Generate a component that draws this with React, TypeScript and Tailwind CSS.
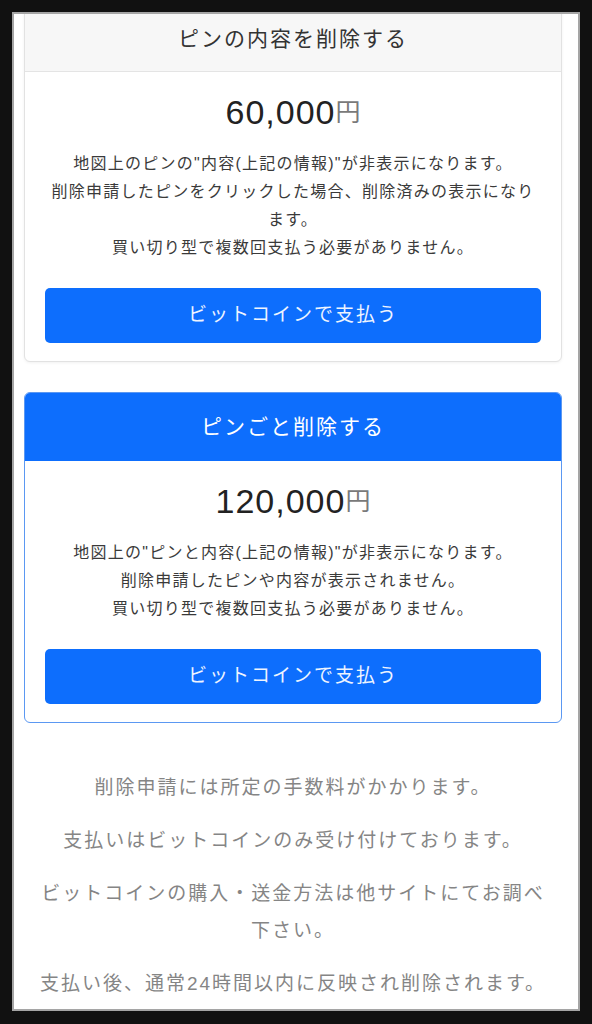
import React from 'react';

const jp = { fontFamily: '"Liberation Sans", "Noto Sans CJK JP", sans-serif' };

type Plan = {
  title: string;
  price: string;
  lines: string[];
  featured?: boolean;
};

const plans: Plan[] = [
  {
    title: 'ピンの内容を削除する',
    price: '60,000',
    lines: [
      '地図上のピンの"内容(上記の情報)"が非表示になります。',
      '削除申請したピンをクリックした場合、削除済みの表示になります。',
      '買い切り型で複数回支払う必要がありません。',
    ],
  },
  {
    title: 'ピンごと削除する',
    price: '120,000',
    lines: [
      '地図上の"ピンと内容(上記の情報)"が非表示になります。',
      '削除申請したピンや内容が表示されません。',
      '買い切り型で複数回支払う必要がありません。',
    ],
    featured: true,
  },
];

const notes = [
  '削除申請には所定の手数料がかかります。',
  '支払いはビットコインのみ受け付けております。',
  'ビットコインの購入・送金方法は他サイトにてお調べ下さい。',
  '支払い後、通常24時間以内に反映され削除されます。',
];

const PlanCard: React.FC<{ plan: Plan }> = ({ plan }) => {
  return (
    <div
      className={
        plan.featured
          ? 'mt-[30px] rounded-[6px] border border-[#5b98f2] bg-white overflow-hidden'
          : '-mt-[9px] rounded-[6px] border border-[#e2e2e2] bg-white overflow-hidden shadow-[0_1px_3px_rgba(0,0,0,0.06)]'
      }
    >
      <div
        className={
          plan.featured
            ? 'h-[68px] flex items-center justify-center bg-[#0d6efd] text-white text-[21px] tracking-[2px]'
            : 'h-[66px] flex items-center justify-center bg-[#f7f7f7] border-b border-[#e4e4e4] text-[#333] text-[21px] tracking-[2px]'
        }
      >
        {plan.title}
      </div>
      <div className="px-[20px] pt-[20px] pb-[18px] text-center">
        <div className="h-[40px] flex items-center justify-center">
          <span className="text-[34px] tracking-[1px] text-[#222] leading-none">{plan.price}</span>
          <span className="text-[25px] text-[#7a7a7a] leading-none">円</span>
        </div>
        <div className="mt-[18px] text-[16px] tracking-[1.25px] leading-[28px] text-[#3a3a3a]">
          {plan.lines.map((l) => (
            <p key={l}>{l}</p>
          ))}
        </div>
        <button className="mt-[26px] w-full h-[55px] rounded-[5px] bg-[#0d6efd] text-[#eef4ff] text-[19px] tracking-[2px]">
          ビットコインで支払う
        </button>
      </div>
    </div>
  );
};

export default function App() {
  return (
    <div className="w-[592px] h-[1024px] bg-[#111] pt-[12px] pb-[13px] px-[12px]" style={jp}>
      <div className="h-full bg-white border-2 border-[#a5a5a5] overflow-hidden">
        <div className="ml-[10px] mr-[16px]">
          <PlanCard plan={plans[0]} />
          <PlanCard plan={plans[1]} />
          <div className="mt-[46px] mx-auto w-[516px] text-center text-[19px] tracking-[2px] leading-[37px] text-[#858585]">
            {notes.map((n) => (
              <p key={n} className="mb-[16px]">
                {n}
              </p>
            ))}
          </div>
        </div>
      </div>
    </div>
  );
}
